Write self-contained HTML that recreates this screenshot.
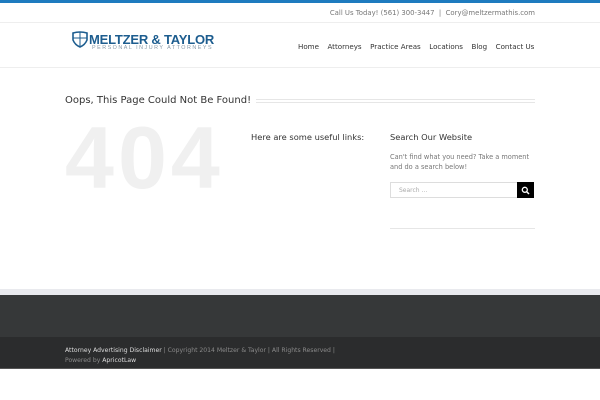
<!DOCTYPE html>
<html><head><style>
*{margin:0;padding:0;box-sizing:border-box}
body{width:600px;height:400px;background:#fff;font-family:"DejaVu Sans","Liberation Sans",sans-serif;position:relative;overflow:hidden}
.a{position:absolute}
</style></head><body>
<div class="a" style="left:0;top:0;width:600px;height:3px;background:#1e7bbf"></div>
<div class="a" style="left:0;top:3px;width:600px;height:20px;border-bottom:1px solid #eee"></div>
<div class="a" style="right:65px;top:9px;font-size:6.9px;color:#777">Call Us Today! (561) 300-3447 &nbsp;|&nbsp; Cory@meltzermathis.com</div>
<svg class="a" style="left:71px;top:31px" width="18" height="17" viewBox="0 0 18 17"><path d="M2 2 Q9 0 16 2 L16 9 Q14 14 9 16 Q4 14 2 9 Z" fill="none" stroke="#1d5d8f" stroke-width="1.6"/><path d="M9 1 V15 M2 7 H16" stroke="#1d5d8f" stroke-width="1"/></svg>
<div class="a" style="left:89px;top:32px;font-size:13px;font-weight:bold;color:#1d5d8f;font-family:'Liberation Sans',sans-serif;letter-spacing:-0.2px">MELTZER &amp; TAYLOR</div>
<div class="a" style="left:92px;top:45px;font-size:5.4px;color:#8a9aa8;letter-spacing:1.5px;font-family:'Liberation Sans',sans-serif">PERSONAL INJURY ATTORNEYS</div>
<div class="a" style="left:298px;top:42px;font-size:7.1px;color:#333">
<span style="margin-right:8.5px">Home</span><span style="margin-right:8.5px">Attorneys</span><span style="margin-right:8.5px">Practice Areas</span><span style="margin-right:8.5px">Locations</span><span style="margin-right:8.5px">Blog</span><span>Contact Us</span></div>
<div class="a" style="left:0;top:67px;width:600px;height:1px;background:#eee"></div>
<div class="a" style="left:65px;top:95px;font-size:10px;color:#333">Oops, This Page Could Not Be Found!</div>
<div class="a" style="left:256px;top:99px;width:279px;height:4px;border-top:1px solid #e6e6e6;border-bottom:1px solid #e6e6e6"></div>
<div class="a" style="left:65px;top:113px;font-size:88px;font-weight:bold;color:#f0f0f0;font-family:'Liberation Sans',sans-serif;letter-spacing:4px;line-height:90px">404</div>
<div class="a" style="left:251px;top:132px;font-size:8.3px;color:#333">Here are some useful links:</div>
<div class="a" style="left:390px;top:132px;font-size:8.3px;color:#333">Search Our Website</div>
<div class="a" style="left:390px;top:152px;font-size:6.6px;color:#777;line-height:10px;width:150px">Can't find what you need? Take a moment and do a search below!</div>
<div class="a" style="left:390px;top:182px;width:128px;height:16px;border:1px solid #ddd;font-size:6px;color:#aaa;padding:4px 0 0 8px">Search ...</div>
<div class="a" style="left:517px;top:182px;width:17px;height:16px;background:#000"></div>
<svg class="a" style="left:521px;top:186px" width="9" height="9" viewBox="0 0 9 9"><circle cx="3.8" cy="3.8" r="2.5" fill="none" stroke="#fff" stroke-width="1.3"/><path d="M5.6 5.6 L8 8" stroke="#fff" stroke-width="1.5"/></svg>
<div class="a" style="left:390px;top:228px;width:145px;height:1px;background:#e6e6e6"></div>
<div class="a" style="left:0;top:289px;width:600px;height:6px;background:#e9eaee"></div>
<div class="a" style="left:0;top:295px;width:600px;height:42px;background:#363839"></div>
<div class="a" style="left:0;top:337px;width:600px;height:32px;background:#2b2c2d;border-bottom:1px solid #555"></div>
<div class="a" style="left:65px;top:346px;font-size:6.1px;color:#8a8a8a;line-height:10px;width:300px"><span style="color:#ddd">Attorney Advertising Disclaimer</span> | Copyright 2014 Meltzer &amp; Taylor | All Rights Reserved |<br>Powered by <span style="color:#ddd">ApricotLaw</span></div>
</body></html>
